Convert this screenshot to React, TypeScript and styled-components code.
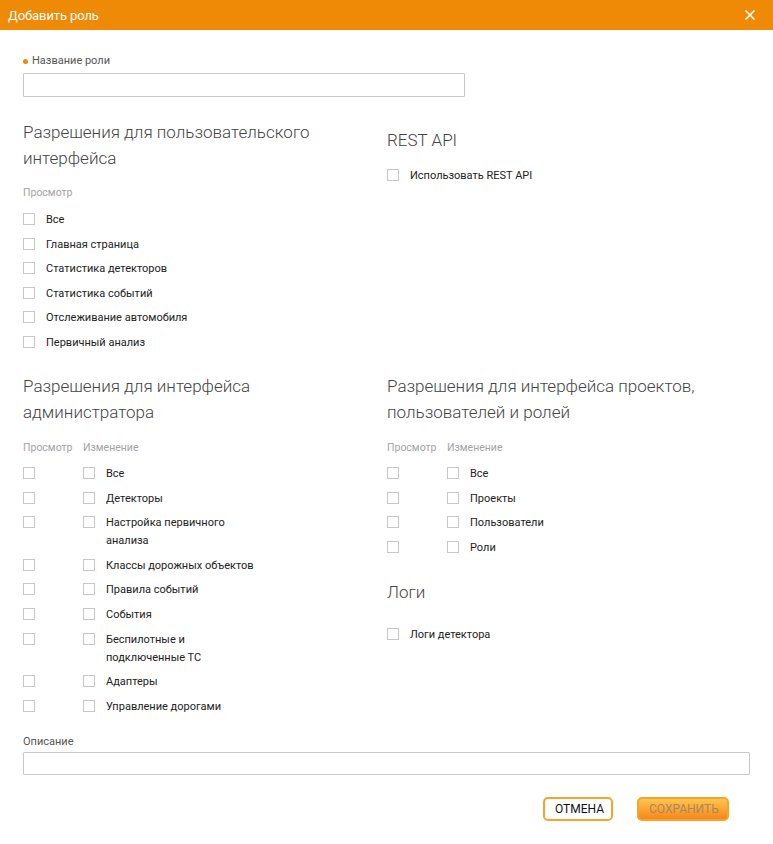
import styled, { createGlobalStyle } from "styled-components";

const GlobalStyle = createGlobalStyle`
  body {
    margin: 0;
    background: #fff;
    font-family: Roboto, "Liberation Sans", Arial, sans-serif;
    color: #333;
  }
`;

interface PermRow {
  label: string;
}

const userRows = [
  "Все",
  "Главная страница",
  "Статистика детекторов",
  "Статистика событий",
  "Отслеживание автомобиля",
  "Первичный анализ",
];

const adminRows = [
  "Все",
  "Детекторы",
  "Настройка первичного анализа",
  "Классы дорожных объектов",
  "Правила событий",
  "События",
  "Беспилотные и подключенные ТС",
  "Адаптеры",
  "Управление дорогами",
];

const projectRows = ["Все", "Проекты", "Пользователи", "Роли"];

const CheckRow: React.FC<PermRow> = ({ label }) => (
  <Row>
    <Box />
    <RowText>{label}</RowText>
  </Row>
);

const TwoColTable: React.FC<{ rows: string[] }> = ({ rows }) => (
  <>
    <ColHeads>
      <SmallLabel>Просмотр</SmallLabel>
      <SmallLabel>Изменение</SmallLabel>
    </ColHeads>
    <Table>
      {rows.map((r) => (
        <TableRow key={r}>
          <BoxCell>
            <Box />
          </BoxCell>
          <CheckRow label={r} />
        </TableRow>
      ))}
    </Table>
  </>
);

const App: React.FC = () => {
  return (
    <>
      <GlobalStyle />
      <Dialog>
        <Header>
          <Title>Добавить роль</Title>
          <CloseIcon viewBox="0 0 12 12">
            <path d="M1.5 1.5 L10.5 10.5 M10.5 1.5 L1.5 10.5" stroke="#fff" strokeWidth="1.6" />
          </CloseIcon>
        </Header>
        <Body>
          <FieldLabel $required>Название роли</FieldLabel>
          <NameInput />

          <Columns>
            <Column>
              <Heading>Разрешения для пользовательского интерфейса</Heading>
              <SmallLabel $top={15}>Просмотр</SmallLabel>
              <List $top={11}>
                {userRows.map((r) => (
                  <CheckRow key={r} label={r} />
                ))}
              </List>
            </Column>
            <Column>
              <Heading $offset={8}>REST API</Heading>
              <List $top={14}>
                <CheckRow label="Использовать REST API" />
              </List>
            </Column>
          </Columns>

          <Columns $top={21}>
            <Column>
              <Heading>Разрешения для интерфейса администратора</Heading>
              <TwoColTable rows={adminRows} />
            </Column>
            <Column>
              <Heading>Разрешения для интерфейса проектов, пользователей и ролей</Heading>
              <TwoColTable rows={projectRows} />
              <Heading $top={22}>Логи</Heading>
              <List $top={21}>
                <CheckRow label="Логи детектора" />
              </List>
            </Column>
          </Columns>

          <FieldLabel $top={19}>Описание</FieldLabel>
          <DescInput />

          <Footer>
            <CancelButton>Отмена</CancelButton>
            <SaveButton disabled>Сохранить</SaveButton>
          </Footer>
        </Body>
      </Dialog>
    </>
  );
};

const Dialog = styled.div`
  width: 773px;
  height: 844px;
  background: #fff;
`;

const Header = styled.div`
  display: flex;
  align-items: center;
  justify-content: space-between;
  height: 30px;
  padding: 0 17px 0 8px;
  background-color: #ee8a06;
`;

const Title = styled.div`
  font-size: 13px;
  color: #fff;
  letter-spacing: -0.1px;
`;

const CloseIcon = styled.svg`
  width: 12px;
  height: 12px;
`;

const Body = styled.div`
  padding: 24px 23px 0 23px;
`;

const FieldLabel = styled.div<{ $required?: boolean; $top?: number }>`
  display: flex;
  align-items: center;
  gap: 4px;
  margin-top: ${(p) => p.$top ?? 0}px;
  font-size: 11px;
  line-height: 14px;
  color: #555;

  &::before {
    content: "";
    display: ${(p) => (p.$required ? "block" : "none")};
    width: 5px;
    height: 5px;
    border-radius: 50%;
    background: #ee8a06;
  }
`;

const BaseInput = styled.input`
  display: block;
  box-sizing: border-box;
  border: 1px solid #c9c9c9;
  border-radius: 1px;
  outline: none;
  background: #fff;
`;

const NameInput = styled(BaseInput)`
  width: 442px;
  height: 24px;
  margin-top: 5px;
`;

const DescInput = styled(BaseInput)`
  width: 727px;
  height: 23px;
  margin-top: 3px;
`;

const Columns = styled.div<{ $top?: number }>`
  display: grid;
  grid-template-columns: 364px 1fr;
  margin-top: ${(p) => p.$top ?? 22}px;
`;

const Column = styled.div`
  display: flex;
  flex-direction: column;
  align-items: flex-start;
`;

const Heading = styled.div<{ $top?: number; $offset?: number }>`
  max-width: 340px;
  margin-top: ${(p) => (p.$top ?? 0) + (p.$offset ?? 0)}px;
  font-size: 17px;
  font-weight: 300;
  line-height: 26px;
  color: #444;
`;

const SmallLabel = styled.div<{ $top?: number }>`
  margin-top: ${(p) => p.$top ?? 0}px;
  font-size: 10.5px;
  line-height: 14px;
  color: #a3a3a3;
`;

const List = styled.div<{ $top?: number }>`
  display: flex;
  flex-direction: column;
  gap: 6.6px;
  margin-top: ${(p) => p.$top ?? 0}px;
`;

const Row = styled.div`
  display: flex;
  align-items: flex-start;
`;

const Box = styled.span`
  flex: none;
  box-sizing: border-box;
  width: 12px;
  height: 12px;
  margin-top: 2px;
  border: 1px solid #c8c8c8;
  background: #fff;
`;

const RowText = styled.span`
  max-width: 153px;
  margin-left: 11px;
  font-size: 11px;
  line-height: 18px;
  color: #222;
`;

const ColHeads = styled.div`
  display: grid;
  grid-template-columns: 60px auto;
  margin-top: 16px;
`;

const Table = styled.div`
  display: flex;
  flex-direction: column;
  gap: 6.6px;
  margin-top: 10px;
`;

const TableRow = styled.div`
  display: grid;
  grid-template-columns: 60px auto;
`;

const BoxCell = styled.div`
  display: flex;
`;

const Footer = styled.div`
  display: flex;
  gap: 24px;
  justify-content: flex-end;
  margin-top: 22px;
  padding-right: 21px;
`;

const ButtonBase = styled.button`
  box-sizing: border-box;
  height: 24px;
  padding: 0 10px;
  border: 2px solid #f6a52a;
  border-radius: 5px;
  font-family: Roboto, "Liberation Sans", Arial, sans-serif;
  font-size: 12px;
  text-transform: uppercase;
`;

const CancelButton = styled(ButtonBase)`
  width: 70px;
  background: #fff;
  color: #111;
`;

const SaveButton = styled(ButtonBase)`
  width: 92px;
  background: linear-gradient(#fdc64f, #f7861a);
  color: #ab8661;
`;

export default App;
